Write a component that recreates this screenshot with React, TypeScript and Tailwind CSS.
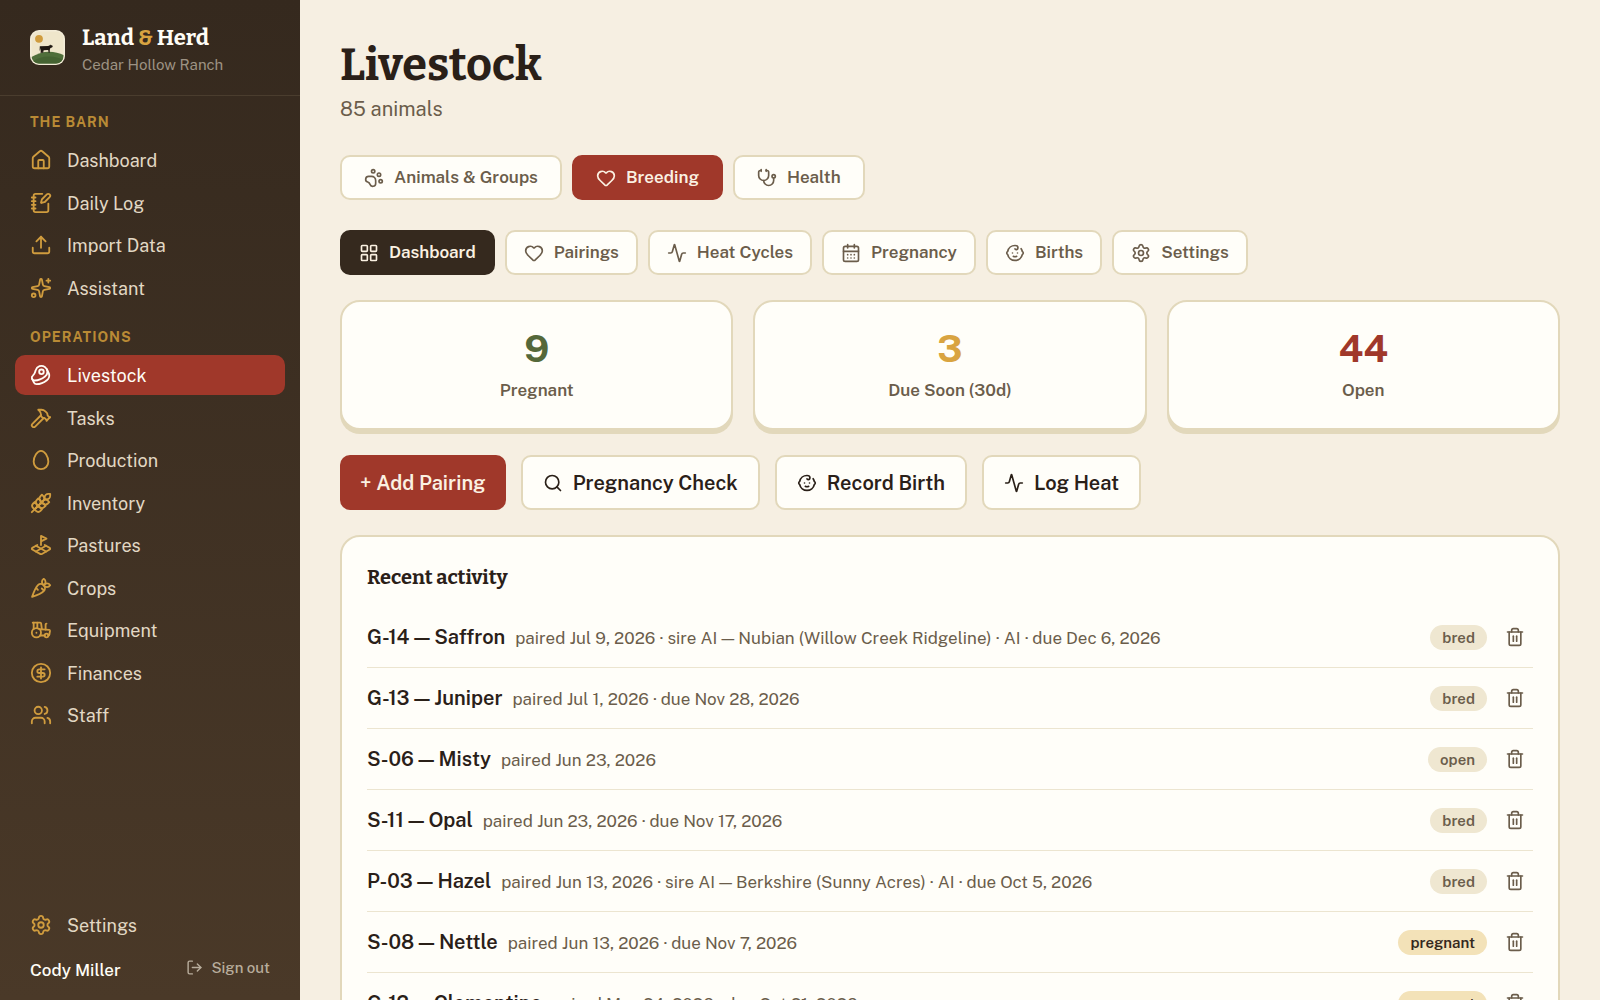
import React, { useState } from 'react';
import {
  Activity, Baby, Beef, CalendarDays, Carrot, CircleDollarSign, Egg, Hammer, Heart, House, LandPlot,
  LayoutGrid, LogOut, NotebookPen, PawPrint, Search, Settings, Sparkles, Stethoscope, Tractor, Trash2,
  Upload, Users, Wheat, type LucideIcon,
} from 'lucide-react';

interface NavEntry {
  label: string;
  icon: LucideIcon;
}

interface BreedingRecord {
  id: string;
  name: string;
  detail: string;
  status: 'bred' | 'open' | 'pregnant';
}

const barnNav: NavEntry[] = [
  { label: 'Dashboard', icon: House },
  { label: 'Daily Log', icon: NotebookPen },
  { label: 'Import Data', icon: Upload },
  { label: 'Assistant', icon: Sparkles },
];

const operationsNav: NavEntry[] = [
  { label: 'Livestock', icon: Beef },
  { label: 'Tasks', icon: Hammer },
  { label: 'Production', icon: Egg },
  { label: 'Inventory', icon: Wheat },
  { label: 'Pastures', icon: LandPlot },
  { label: 'Crops', icon: Carrot },
  { label: 'Equipment', icon: Tractor },
  { label: 'Finances', icon: CircleDollarSign },
  { label: 'Staff', icon: Users },
];

const sections: NavEntry[] = [
  { label: 'Animals & Groups', icon: PawPrint },
  { label: 'Breeding', icon: Heart },
  { label: 'Health', icon: Stethoscope },
];

const breedingTabs: NavEntry[] = [
  { label: 'Dashboard', icon: LayoutGrid },
  { label: 'Pairings', icon: Heart },
  { label: 'Heat Cycles', icon: Activity },
  { label: 'Pregnancy', icon: CalendarDays },
  { label: 'Births', icon: Baby },
  { label: 'Settings', icon: Settings },
];

const stats = [
  { label: 'Pregnant', value: 9, color: 'text-[#55683a]' },
  { label: 'Due Soon (30d)', value: 3, color: 'text-[#d9a441]' },
  { label: 'Open', value: 44, color: 'text-[#a0382a]' },
];

const quickActions: NavEntry[] = [
  { label: 'Pregnancy Check', icon: Search },
  { label: 'Record Birth', icon: Baby },
  { label: 'Log Heat', icon: Activity },
];

const records: BreedingRecord[] = [
  { id: 'G-14', name: 'Saffron', detail: 'paired Jul 9, 2026 · sire AI — Nubian (Willow Creek Ridgeline) · AI · due Dec 6, 2026', status: 'bred' },
  { id: 'G-13', name: 'Juniper', detail: 'paired Jul 1, 2026 · due Nov 28, 2026', status: 'bred' },
  { id: 'S-06', name: 'Misty', detail: 'paired Jun 23, 2026', status: 'open' },
  { id: 'S-11', name: 'Opal', detail: 'paired Jun 23, 2026 · due Nov 17, 2026', status: 'bred' },
  { id: 'P-03', name: 'Hazel', detail: 'paired Jun 13, 2026 · sire AI — Berkshire (Sunny Acres) · AI · due Oct 5, 2026', status: 'bred' },
  { id: 'S-08', name: 'Nettle', detail: 'paired Jun 13, 2026 · due Nov 7, 2026', status: 'pregnant' },
  { id: 'G-12', name: 'Clementine', detail: 'paired May 24, 2026 · due Oct 21, 2026', status: 'pregnant' },
];

const Logo: React.FC = () => (
  <svg viewBox="0 0 35 35" className="mt-2 size-[35px] shrink-0" aria-hidden="true">
    <defs>
      <clipPath id="logo-clip">
        <rect x="1.5" y="1.5" width="32" height="32" rx="7.500" />
      </clipPath>
    </defs>
    <rect width="35" height="35" rx="9" fill="#f3ecd8" />
    <g clipPath="url(#logo-clip)">
      <rect width="35" height="35" fill="#efe6cb" />
      <path d="M0 28C6 24 13 21.800 19 21.800c6 0 11 1.700 16 4V35H0z" fill="#4f6e3a" />
      <path d="M3 31c6-3.500 11-5 17-4.500 5 .3 9 1.500 15 3.500v5H3z" fill="#456332" />
    </g>
    <circle cx="9" cy="8.800" r="3.900" fill="#d09c3e" />
    <path d="M9.800 16.300l8.200-.3 1.500-.6.700-.9.600.7h1.300l.7 1.300-.8 1.100-1.600.3-.6 1.900-.1 3h-1.100l-.3-2.500-.8-.2-3.700.2-.4.600-.1 2h-1l-.2-1.700-.4 1.800h-1.100l.2-3-.3-2-.3 2.600-.6-.1z" fill="#1f1812" />
  </svg>
);

const NavItem: React.FC<{ entry: NavEntry; active?: boolean }> = ({ entry, active }) => {
  const Icon = entry.icon;
  return (
    <a
      href="#"
      className={`flex h-10 items-center gap-[15px] rounded-[10px] px-[15px] text-[18px] ${
        active ? 'bg-[#a0382a] text-[#fffdf6]' : 'text-[#e2d8c4]'
      }`}
    >
      <Icon size={22} className={active ? 'text-[#fffdf6]' : 'text-[#d09c3e]'} />
      {entry.label}
    </a>
  );
};

const NavGroup: React.FC<{ title: string; items: NavEntry[]; current?: string }> = ({ title, items, current }) => (
  <div>
    <h2 className="px-[15px] pb-[6px] text-[14px] leading-5 font-bold tracking-[1px] text-[#b98a35] uppercase">{title}</h2>
    <ul>
      {items.map((item) => (
        <li key={item.label} className="odd:pt-[2px] even:pt-[3px]">
          <NavItem entry={item} active={item.label === current} />
        </li>
      ))}
    </ul>
  </div>
);

const App: React.FC = () => {
  const [section, setSection] = useState('Breeding');
  const [tab, setTab] = useState('Dashboard');

  return (
    <div className="flex h-screen overflow-hidden bg-[#f6efe2] font-['Public_Sans','Inter',sans-serif] text-[#2a2018]">
      {/* Sidebar */}
      <aside className="flex w-[300px] shrink-0 flex-col bg-linear-to-b from-[#35291e] to-[#4a3928]">
        <div className="flex h-24 items-start gap-[17px] border-b border-[#4a3d2e] px-[30px] pt-[22px]">
          <Logo />
          <div>
            <div className="font-['Bitter','DejaVu_Serif',serif] text-[22px] leading-8 font-bold text-[#fffdf6]">
              Land <span className="text-[#d9a441]">&amp;</span> Herd
            </div>
            <div className="text-[15px] leading-[22px] text-[#9d9283]">Cedar Hollow Ranch</div>
          </div>
        </div>

        <nav className="flex flex-1 flex-col gap-[19px] px-[15px] pt-4">
          <NavGroup title="The Barn" items={barnNav} />
          <NavGroup title="Operations" items={operationsNav} current="Livestock" />
        </nav>

        <div className="px-[15px] pb-[15px]">
          <NavItem entry={{ label: 'Settings', icon: Settings }} />
          <div className="mt-[10px] flex items-start justify-between px-[15px]">
            <span className="text-[17px] leading-[30px] font-medium text-[#fffdf6]">Cody Miller</span>
            <button type="button" className="flex items-center gap-2 text-[15px] leading-[25px] font-medium text-[#b8ad9c]">
              <LogOut size={17} />
              Sign out
            </button>
          </div>
        </div>
      </aside>

      {/* Content */}
      <main className="min-w-0 flex-1 overflow-y-auto px-10 pt-10 pb-10 [scrollbar-width:none]">
        <h1 className="font-['Bitter','DejaVu_Serif',serif] text-[45px] leading-[50px] font-bold">Livestock</h1>
        <p className="mt-1 text-[20px] leading-[30px] text-[#6b5d4b]">85 animals</p>

        <div className="mt-[31px] flex flex-wrap gap-[10px]">
          {sections.map(({ label, icon: Icon }) => (
            <button
              key={label}
              type="button"
              onClick={() => setSection(label)}
              className={`flex h-[45px] items-center gap-[10px] rounded-[10px] border-2 px-[22px] text-[17px] font-semibold ${
                section === label
                  ? 'border-[#a0382a] bg-[#a0382a] text-[#fbf1e2]'
                  : 'border-[#e2d8bb] bg-[#fffef9] text-[#6b5d4b]'
              }`}
            >
              <Icon size={20} />
              {label}
            </button>
          ))}
        </div>

        <div className="mt-[30px] flex flex-wrap gap-[10px]">
          {breedingTabs.map(({ label, icon: Icon }) => (
            <button
              key={label}
              type="button"
              onClick={() => setTab(label)}
              className={`flex h-[45px] items-center gap-[10px] rounded-[10px] border-2 px-[17px] text-[17px] font-semibold ${
                tab === label
                  ? 'border-[#35291e] bg-[#35291e] text-[#fbf1e2]'
                  : 'border-[#e2d8bb] bg-[#fffef9] text-[#6b5d4b]'
              }`}
            >
              <Icon size={20} />
              {label}
            </button>
          ))}
        </div>

        {/* Stat cards */}
        <div className="mt-[25px] grid grid-cols-3 gap-5">
          {stats.map((stat) => (
            <div
              key={stat.label}
              className="flex h-[130px] flex-col items-center justify-center rounded-[20px] border-2 border-[#e2d8bb] bg-[#fffef9] shadow-[0_4px_0_#e2d8bb]"
            >
              <div className={`text-[38px] leading-[50px] font-bold ${stat.color}`}>{stat.value}</div>
              <div className="text-[17px] leading-8 font-semibold text-[#6b5d4b]">{stat.label}</div>
            </div>
          ))}
        </div>

        <div className="mt-[25px] flex flex-wrap gap-[15px]">
          <button type="button" className="h-[55px] rounded-[10px] bg-[#a0382a] px-5 text-[20px] font-semibold text-[#fbf1e2]">
            + Add Pairing
          </button>
          {quickActions.map(({ label, icon: Icon }) => (
            <button
              key={label}
              type="button"
              className="flex h-[55px] items-center gap-[10px] rounded-[10px] border-2 border-[#e2d8bb] bg-[#fffef9] px-5 text-[20px] font-semibold"
            >
              <Icon size={20} />
              {label}
            </button>
          ))}
        </div>

        {/* Recent activity */}
        <section className="mt-[25px] rounded-[20px] border-2 border-[#e2d8bb] bg-[#fffef9] px-[25px] pt-[25px] pb-5">
          <h2 className="font-['Bitter','DejaVu_Serif',serif] text-[20px] leading-[30px] font-bold">Recent activity</h2>
          <ul className="mt-[15px]">
            {records.map((record) => (
              <li key={record.id} className="flex h-[61px] items-center border-b border-[#ece5d0]">
                <p className="flex min-w-0 flex-1 items-baseline gap-[10px]">
                  <span className="shrink-0 text-[20px] font-semibold">{record.id} — {record.name}</span>
                  <span className="truncate text-[17px] text-[#6b5d4b]">{record.detail}</span>
                </p>
                <span
                  className={`rounded-full px-3 text-[15px] leading-[25px] font-semibold ${
                    record.status === 'pregnant' ? 'bg-[#f3e2b8] text-[#35291e]' : 'bg-[#efe7d1] text-[#6b5d4b]'
                  }`}
                >
                  {record.status}
                </span>
                <button type="button" aria-label={`Delete ${record.id}`} className="ml-[10px] p-2 text-[#6b5d4b]">
                  <Trash2 size={20} />
                </button>
              </li>
            ))}
          </ul>
        </section>
      </main>
    </div>
  );
};

export default App;
